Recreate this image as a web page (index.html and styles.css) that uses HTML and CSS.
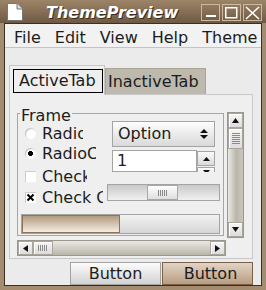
FILE: index.html
```html
<!DOCTYPE html>
<html>
<head>
	<title>ThemePreview</title>
	<link rel="stylesheet" href="styles.css">
</head>
<body>
<div class="window">
	<div class="titlebar">
		<svg class="app-icon" width="17" height="18" viewBox="0 0 17 18">
			<path d="M1.5 0.5 H11 L16.5 6 V17.5 H1.5 Z" fill="#fff" stroke="#777"/>
			<path d="M11 0.5 V6 H16.5" fill="#ddd" stroke="#777"/>
		</svg>
		<span class="title">ThemePreview</span>
		<div class="wm-buttons">
			<svg class="wm-btn" width="19" height="17" viewBox="0 0 19 17">
				<rect x="0.5" y="0.5" width="18" height="16" fill="none" stroke="#cdb99f"/>
				<rect x="5" y="11" width="10" height="2" fill="#fff"/>
			</svg>
			<svg class="wm-btn" width="19" height="17" viewBox="0 0 19 17">
				<rect x="0.5" y="0.5" width="18" height="16" fill="none" stroke="#cdb99f"/>
				<rect x="3.75" y="3.75" width="11" height="10" fill="none" stroke="#fff" stroke-width="1.5"/>
			</svg>
			<svg class="wm-btn" width="19" height="17" viewBox="0 0 19 17">
				<rect x="0.5" y="0.5" width="18" height="16" fill="none" stroke="#cdb99f"/>
				<path d="M3 3 L16 15 M16 3 L3 15" stroke="#fff" stroke-width="1.6"/>
			</svg>
		</div>
	</div>

	<div class="client">
		<div class="menubar">
			<span>File</span>
			<span>Edit</span>
			<span>View</span>
			<span>Help</span>
			<span>Theme</span>
		</div>

		<div class="notebook">
			<div class="tabs">
				<div class="tab-active"><span class="focus-ring">ActiveTab</span></div>
				<div class="tab">InactiveTab</div>
			</div>
			<div class="pane">
				<div class="frame">
					<span class="frame-label">Frame</span>
					<div class="frame-top">
						<div class="col-left">
							<div class="row"><span class="ind radio"></span><span class="lbl w-r1">Radio</span></div>
							<div class="row"><span class="ind radio on"></span><span class="lbl w-r2">RadioChoice</span></div>
							<div class="row c1"><span class="ind check"></span><span class="lbl w-c1">Check</span></div>
							<div class="row c2">
								<span class="ind check">
									<svg width="11" height="11" viewBox="0 0 11 11"><path d="M2.5 2.5 L8.5 8.5 M8.5 2.5 L2.5 8.5" stroke="#000" stroke-width="2"/></svg>
								</span>
								<span class="lbl w-c2">Check Check</span>
							</div>
						</div>
						<div class="col-right">
							<div class="option">
								<span>Option</span>
								<svg width="8" height="10" viewBox="0 0 8 10"><path d="M0 4 L4 0 L8 4 Z M0 6 L8 6 L4 10 Z" fill="#111"/></svg>
							</div>
							<div class="spinbox">
								<span class="entry">1</span>
								<span class="arrows">
									<span class="arrow-btn"><svg width="7" height="4" viewBox="0 0 7 4"><path d="M0 4 L3.5 0 L7 4 Z" fill="#111"/></svg></span>
									<span class="arrow-btn down"><svg width="7" height="4" viewBox="0 0 7 4"><path d="M0 0 L7 0 L3.5 4 Z" fill="#111"/></svg></span>
								</span>
							</div>
							<div class="scale"><span class="slider"><span class="grip-v"></span></span></div>
						</div>
					</div>
					<div class="progress"><span class="bar" style="width: 98px"></span></div>
				</div>

				<div class="vscroll">
					<span class="sb-btn"><svg width="7" height="5" viewBox="0 0 7 5"><path d="M0 5 L3.5 0 L7 5 Z" fill="#111"/></svg></span>
					<span class="sb-btn vthumb"><span class="grip-h"></span></span>
					<span class="trough"></span>
					<span class="sb-btn"><svg width="7" height="5" viewBox="0 0 7 5"><path d="M0 0 L7 0 L3.5 5 Z" fill="#111"/></svg></span>
				</div>

				<div class="hscroll">
					<span class="sb-btn"><svg width="5" height="7" viewBox="0 0 5 7"><path d="M5 0 L5 7 L0 3.5 Z" fill="#111"/></svg></span>
					<span class="sb-btn hthumb"><span class="grip-v"></span></span>
					<span class="trough"></span>
					<span class="sb-btn"><svg width="5" height="7" viewBox="0 0 5 7"><path d="M0 0 L5 3.5 L0 7 Z" fill="#111"/></svg></span>
				</div>
			</div>
		</div>

		<div class="buttons">
			<span class="button">Button</span>
			<span class="button hot">Button</span>
		</div>
	</div>
</div>
</body>
</html>
```

FILE: styles.css
```css
body
{
	margin: 0;
	font-family: "DejaVu Sans", sans-serif;
	font-size: 16px;
	color: #1c1c1c;
	background-color: #a48c70;
}
.window
{
	width: 266px;
	height: 290px;
	display: flex;
	flex-direction: column;
	background-color: #a48c70;
}

/* title bar */
.titlebar
{
	height: 23px;
	flex: none;
	display: flex;
	align-items: center;
	padding: 0 4px 0 6px;
	background: linear-gradient(#9c8468, #6e5942);
}
.app-icon
{
	display: block;
}
.title
{
	margin-left: 23px;
	padding-top: 1px;
	color: white;
	font-weight: bold;
	font-style: italic;
	text-shadow: 1px 1px 0 #3a2c1e;
}
.wm-buttons
{
	margin-left: auto;
	margin-top: 2px;
	display: flex;
	gap: 2px;
}
.wm-btn
{
	display: block;
}

/* client area */
.client
{
	flex: 1;
	min-height: 0;
	margin: 0 4px 4px 4px;
	border: 1px solid #3b2f23;
	background-color: #ebebeb;
	display: flex;
	flex-direction: column;
}
.menubar
{
	display: flex;
	height: 18px;
	line-height: 18px;
	padding: 5px 0 0 2px;
	background-color: #f2f2f2;
	border-bottom: 1px solid #c4c4c4;
}
.menubar span
{
	padding: 0 7px;
}

/* notebook */
.notebook
{
	margin: 17px 0 0 4px;
	width: 244px;
}
.tabs
{
	display: flex;
	align-items: flex-end;
	margin-bottom: -1px;
	position: relative;
	z-index: 1;
}
.tab-active
{
	border: 1px solid #c8c8c8;
	border-bottom: 0;
	background-color: #efefef;
	padding: 3px 1px 2px 3px;
}
.focus-ring
{
	display: block;
	width: 90px;
	box-sizing: border-box;
	border: 1px solid black;
	padding-left: 5px;
	line-height: 22px;
	white-space: nowrap;
}
.tab
{
	width: 101px;
	box-sizing: border-box;
	margin-bottom: 1px;
	border: 1px solid #a8a496;
	border-bottom: 0;
	background-color: #bdb9ad;
	padding-left: 2px;
	line-height: 25px;
	white-space: nowrap;
}
.pane
{
	border: 1px solid #c8c8c8;
	background-color: #efefef;
	padding: 17px 8px 2px 7px;
	display: grid;
	grid-template-columns: 207px 17px;
	column-gap: 3px;
}

/* labelled frame */
.frame
{
	position: relative;
	align-self: start;
	margin-top: 1px;
	height: 123px;
	box-sizing: border-box;
	border: 1px solid #a6a6a6;
}
.frame-label
{
	position: absolute;
	top: -7px;
	left: 2px;
	padding: 0 1px;
	line-height: 18px;
	background-color: #efefef;
}
.frame-top
{
	display: flex;
	height: 100px;
}
.col-left
{
	width: 89px;
	flex: none;
	box-sizing: border-box;
	padding: 10px 0 0 7px;
}
.row
{
	display: flex;
	align-items: center;
	height: 20px;
}
.row.c1
{
	margin-top: 3px;
}
.row.c2
{
	margin-top: 1px;
}
.ind
{
	width: 11px;
	height: 11px;
	flex: none;
	margin: 0 6px 2px 0;
	background-color: white;
}
.ind svg
{
	display: block;
}
.radio
{
	border-radius: 50%;
	box-shadow: inset 1px 1px 1px rgba(0, 0, 0, 0.25);
}
.radio.on
{
	background: radial-gradient(circle, #000 0 2.2px, #fff 2.8px);
}
.check
{
	box-shadow: inset 1px 1px 0 #cccccc;
}
.lbl
{
	overflow: hidden;
	white-space: nowrap;
	line-height: 20px;
}
.w-r1 { width: 41px; }
.w-r2 { width: 54px; }
.w-c1 { width: 45px; }
.w-c2 { width: 61px; }

.col-right
{
	display: flex;
	flex-direction: column;
	align-items: flex-start;
}
.option
{
	margin: 7px 0 0 5px;
	width: 103px;
	height: 26px;
	box-sizing: border-box;
	border: 1px solid #a4a4a4;
	background: linear-gradient(#fdfdfd, #d9d9d9);
	display: flex;
	align-items: center;
	justify-content: space-between;
	padding: 0 6px 0 5px;
	line-height: 24px;
}
.option svg
{
	display: block;
}
.spinbox
{
	margin: 3px 0 0 5px;
	display: flex;
	height: 22px;
}
.entry
{
	width: 85px;
	box-sizing: border-box;
	border: 1px solid #a4a4a4;
	background-color: white;
	padding-left: 4px;
	line-height: 20px;
}
.arrows
{
	width: 18px;
	height: 22px;
	box-sizing: border-box;
	padding-top: 1px;
	overflow: hidden;
	display: flex;
	flex-direction: column;
	gap: 1px;
}
.arrow-btn
{
	flex: none;
	height: 15px;
	box-sizing: border-box;
	border: 1px solid #a4a4a4;
	background: linear-gradient(#fbfbfb, #dadada);
	display: flex;
	align-items: center;
	justify-content: center;
}
.arrow-btn.down
{
	align-items: flex-start;
	padding-top: 2px;
}
.arrow-btn svg,
.sb-btn svg
{
	display: block;
}
.scale
{
	margin-top: 12px;
	width: 113px;
	height: 17px;
	box-sizing: border-box;
	border: 1px solid #a4a4a4;
	background: linear-gradient(#c9c9c9, #f0f0f0);
	display: flex;
}
.slider
{
	margin-left: 39px;
	width: 31px;
	box-sizing: border-box;
	border: 1px solid #a8a8a8;
	background: linear-gradient(#fefefe, #dedede);
	display: flex;
	align-items: center;
	justify-content: center;
}
.grip-v
{
	width: 10px;
	height: 6px;
	background: repeating-linear-gradient(to right, #8a8a8a 0 1px, transparent 1px 2px);
}
.progress
{
	margin-left: 3px;
	width: 199px;
	height: 20px;
	box-sizing: border-box;
	border: 1px solid #a4a4a4;
	background: linear-gradient(#f2f2f2, #d6d6d6);
}
.bar
{
	display: block;
	height: 100%;
	box-sizing: border-box;
	border: 1px solid #8c7256;
	background: linear-gradient(#b49a7c, #f3ede6);
}

/* scrollbars */
.vscroll
{
	height: 126px;
	box-sizing: border-box;
	border: 1px solid #9a968c;
	display: flex;
	flex-direction: column;
	background: linear-gradient(to right, #ebe9e4, #b9b5aa 55%, #cbc7bc);
}
.sb-btn
{
	flex: none;
	height: 15px;
	box-sizing: border-box;
	border: 1px solid #aaa69c;
	box-shadow: inset 1px 1px #ffffff;
	background: linear-gradient(#f6f6f6, #dcdcdc);
	display: flex;
	align-items: center;
	justify-content: center;
}
.vthumb
{
	height: 21px;
}
.trough
{
	flex: 1;
}
.grip-h
{
	width: 8px;
	height: 11px;
	background: repeating-linear-gradient(#8a8a8a 0 1px, transparent 1px 2px);
}
.hscroll
{
	grid-column: 1 / 3;
	width: 209px;
	height: 16px;
	margin-top: 2px;
	box-sizing: border-box;
	border: 1px solid #9a968c;
	display: flex;
	background: linear-gradient(#ebe9e4, #b9b5aa);
}
.hscroll .sb-btn
{
	width: 15px;
	height: auto;
}
.hscroll .hthumb
{
	width: 20px;
}

/* bottom buttons */
.buttons
{
	display: flex;
	justify-content: flex-end;
	gap: 1px;
	margin: 3px 8px 0 0;
}
.button
{
	width: 91px;
	height: 23px;
	box-sizing: border-box;
	border: 1px solid #a2a2a2;
	background: linear-gradient(#fcfcfc, #d2d2d2);
	text-align: center;
	line-height: 21px;
}
.button.hot
{
	padding-left: 6px;
	border-color: #7a6047;
	background: linear-gradient(#e2d4c6, #b89c80);
}
```
